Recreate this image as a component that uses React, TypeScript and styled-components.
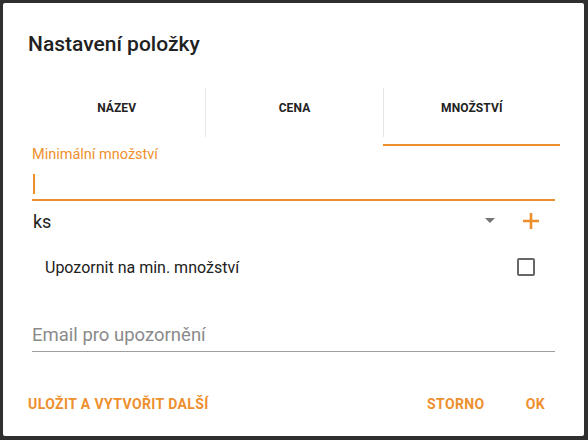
import { createGlobalStyle } from "styled-components";
import styled from "styled-components";

const ORANGE = "#ee8f2e";

const Global = createGlobalStyle`
  html, body {
    margin: 0;
    padding: 0;
    background: #2f2f2f;
    font-family: Roboto, "Noto Sans", sans-serif;
  }
`;

const Screen = styled.div`
  width: 588px;
  height: 440px;
  padding: 3px 4px 4px 3px;
  box-sizing: border-box;
`;

const Dialog = styled.div`
  height: 100%;
  background: #fff;
  border-radius: 2px;
  display: flex;
  flex-direction: column;
  padding: 29px 24px 0 25px;
  box-sizing: border-box;
`;

const Title = styled.h2`
  margin: 0;
  font-size: 21px;
  line-height: 24px;
  font-weight: 500;
  color: #212121;
`;

const Tabs = styled.div`
  margin-top: 32px;
  display: grid;
  grid-template-columns: repeat(3, 1fr);
  height: 58px;
`;

const Tab = styled.div<{ $active?: boolean; $divider?: boolean }>`
  position: relative;
  display: flex;
  align-items: center;
  justify-content: center;
  padding-bottom: 10px;
  font-size: 12px;
  font-weight: 700;
  color: #222;
  letter-spacing: 0.1px;
  border-left: ${({ $divider }) => ($divider ? "1px solid #e6e6e6" : "none")};
  margin-bottom: 9px;
  &::after {
    content: "";
    display: ${({ $active }) => ($active ? "block" : "none")};
    position: absolute;
    left: -1px;
    right: 0;
    bottom: -9px;
    height: 2px;
    background: ${ORANGE};
  }
`;

const Fields = styled.div`
  padding: 0 5px 0 4px;
  display: flex;
  flex-direction: column;
`;

const FloatLabel = styled.div`
  margin-top: 1px;
  font-size: 14.5px;
  line-height: 15px;
  color: ${ORANGE};
`;

const Input = styled.div<{ $focused?: boolean }>`
  height: 39px;
  display: flex;
  align-items: center;
  border-bottom: ${({ $focused }) => ($focused ? `2px solid ${ORANGE}` : "1px solid #9e9e9e")};
  box-sizing: border-box;
  font-size: 18.5px;
  color: #8a8a8a;
  padding-top: 4px;
`;

const Caret = styled.span`
  width: 2px;
  height: 20px;
  margin-left: 1px;
  margin-top: 2px;
  background: ${ORANGE};
`;

const SelectRow = styled.div`
  height: 40px;
  display: flex;
  align-items: center;
  font-size: 18px;
  color: #212121;
  padding-left: 1px;
`;

const Grow = styled.div`
  flex: 1;
`;

const Row = styled.div`
  height: 40px;
  margin-top: 6px;
  display: flex;
  align-items: center;
  padding-left: 13px;
  font-size: 16px;
  color: #212121;
`;

const Checkbox = styled.span`
  width: 14px;
  height: 14px;
  border: 2px solid #666;
  border-radius: 2px;
  margin-right: 20px;
`;

const EmailField = styled(Input)`
  margin-top: 27px;
  height: 38px;
`;

const Actions = styled.div`
  margin-top: auto;
  height: 64px;
  display: flex;
  align-items: center;
  padding-top: 2px;
  padding-bottom: 2px;
  box-sizing: border-box;
`;

const ActionButton = styled.button`
  background: none;
  border: none;
  padding: 0;
  font-family: inherit;
  font-size: 14px;
  font-weight: 700;
  color: ${ORANGE};
  letter-spacing: 0.4px;
  cursor: pointer;
`;

const Right = styled.div`
  margin-left: auto;
  display: flex;
  gap: 41px;
  padding-right: 15px;
`;

export default function App() {
  return (
    <>
      <Global />
      <Screen>
        <Dialog>
          <Title>Nastavení položky</Title>
          <Tabs>
            <Tab>NÁZEV</Tab>
            <Tab $divider>CENA</Tab>
            <Tab $divider $active>MNOŽSTVÍ</Tab>
          </Tabs>
          <Fields>
            <FloatLabel>Minimální množství</FloatLabel>
            <Input $focused>
              <Caret />
            </Input>
            <SelectRow>
              ks
              <Grow />
              <svg width="10" height="6" viewBox="0 0 10 6" style={{ marginRight: 26 }}>
                <path d="M0 0h10L5 5z" fill="#757575" />
              </svg>
              <svg width="20" height="20" viewBox="0 0 20 20" style={{ marginRight: 14 }}>
                <path d="M10 2v16M2 10h16" stroke={ORANGE} strokeWidth="2.6" />
              </svg>
            </SelectRow>
            <Row>
              Upozornit na min. množství
              <Grow />
              <Checkbox />
            </Row>
            <EmailField>Email pro upozornění</EmailField>
          </Fields>
          <Actions>
            <ActionButton>ULOŽIT A VYTVOŘIT DALŠÍ</ActionButton>
            <Right>
              <ActionButton>STORNO</ActionButton>
              <ActionButton>OK</ActionButton>
            </Right>
          </Actions>
        </Dialog>
      </Screen>
    </>
  );
}
